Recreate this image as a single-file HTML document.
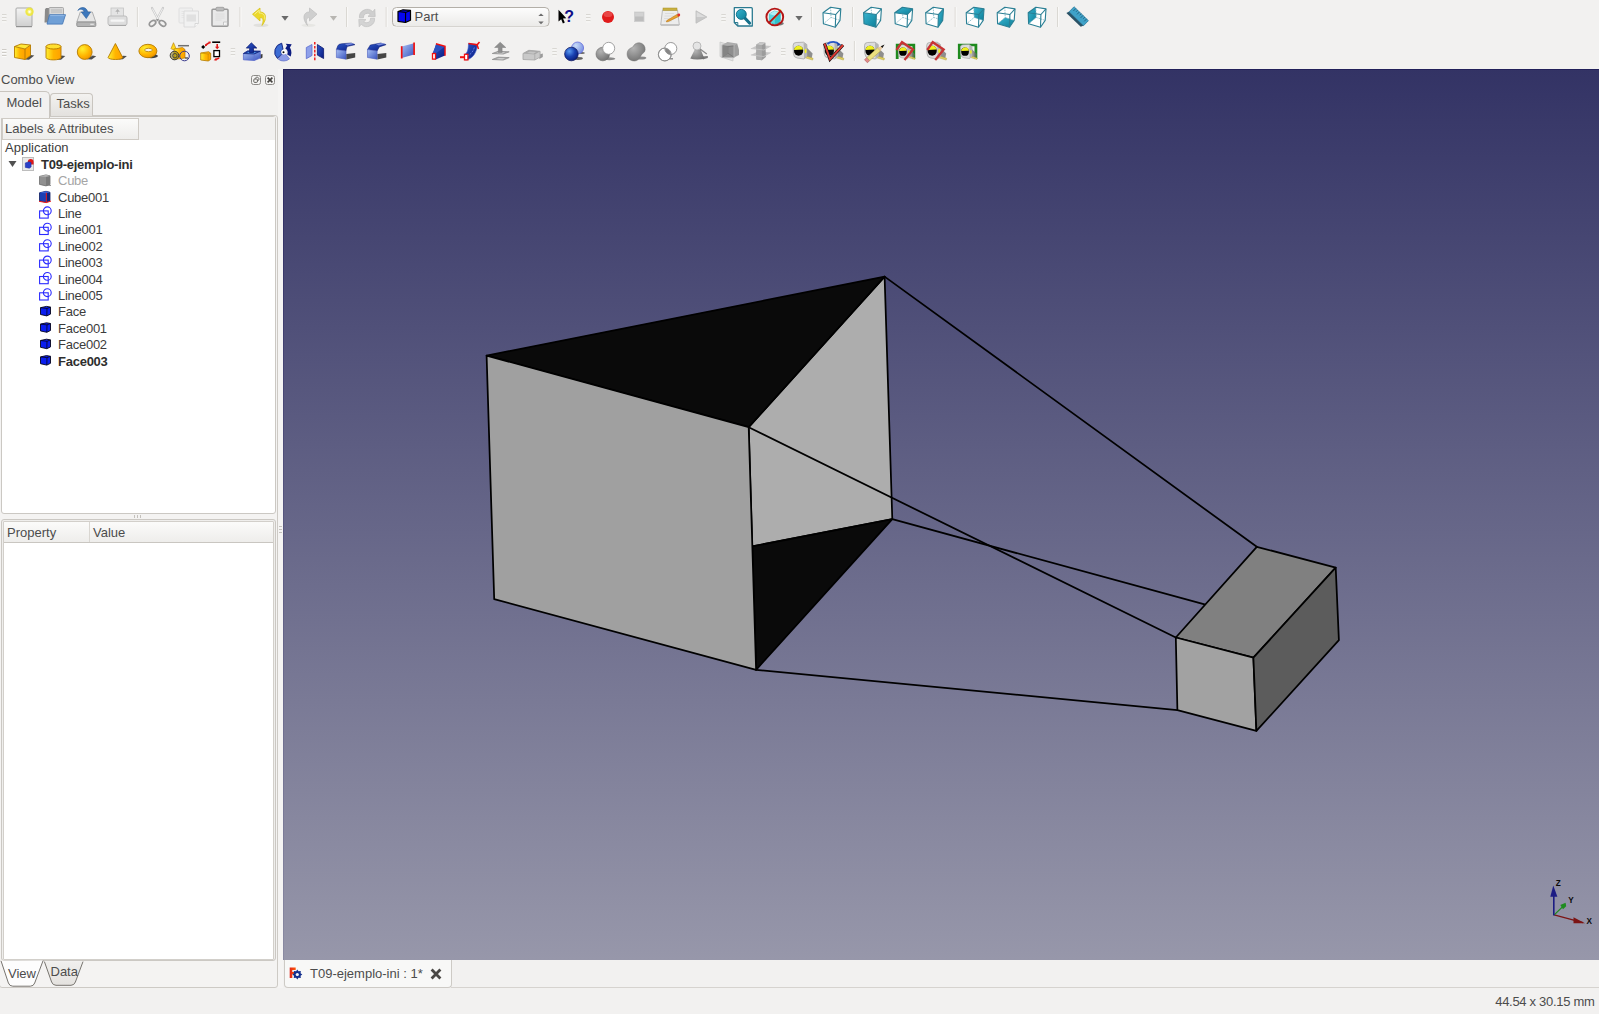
<!DOCTYPE html>
<html>
<head>
<meta charset="utf-8">
<title>FreeCAD</title>
<style>
html,body{margin:0;padding:0;}
body{width:1599px;height:1014px;overflow:hidden;background:#f2f1f0;font-family:"Liberation Sans",sans-serif;font-size:13px;color:#4c4c4c;position:relative;}
.abs{position:absolute;}
.t{position:absolute;white-space:nowrap;line-height:16px;}
#view3d{position:absolute;left:283px;top:69px;width:1316px;height:891px;background:linear-gradient(to bottom,#333365 0%,#9797aa 100%);}
#view3d svg{position:absolute;left:0;top:0;}
.frame{position:absolute;border:1px solid #cbc8c3;border-radius:3px;background:#fff;box-sizing:border-box;}
.hdr{position:absolute;box-sizing:border-box;border:1px solid #cfcbc5;background:linear-gradient(to bottom,#fbfbfa,#eeedeb);}
.row{position:absolute;left:58px;white-space:nowrap;line-height:16px;color:#3c3c3c;letter-spacing:-0.25px;}
</style>
</head>
<body>

<!-- ============ 3D VIEW ============ -->
<div id="view3d">
<div class="abs" style="left:0;top:0;width:1316px;height:1px;background:#22205a;"></div>
<div class="abs" style="left:0;top:0;width:1px;height:891px;background:linear-gradient(to bottom,#22205a 0%,#8a8aa2 100%);"></div>
<svg width="1316" height="891" viewBox="283 69 1316 891">
 <g stroke="#000" stroke-width="1.75" stroke-linejoin="round" stroke-linecap="round">
  <!-- light inner face -->
  <polygon points="748.7,427.2 884.6,276.6 892.3,519.2 752.2,546.4" fill="#adadad"/>
  <!-- black top -->
  <polygon points="486.6,355.6 884.6,276.6 748.7,427.2" fill="#0a0a0a"/>
  <!-- black bottom -->
  <polygon points="752.2,546.4 892.3,519.2 756.1,669.8" fill="#0a0a0a"/>
  <!-- front big face -->
  <polygon points="486.6,355.6 748.7,427.2 756.1,669.8 494.2,599.2" fill="#a0a0a0"/>
  <!-- connecting lines -->
  <line x1="884.6" y1="276.6" x2="1256.8" y2="546.8"/>
  <line x1="748.7" y1="427.2" x2="1175.8" y2="637.5"/>
  <line x1="892.3" y1="519.2" x2="1204.6" y2="604.4"/>
  <line x1="756.1" y1="669.8" x2="1177.4" y2="710.1"/>
  <!-- small box -->
  <polygon points="1256.8,546.8 1335.7,567.6 1253.4,657.7 1175.8,637.5" fill="#808080"/>
  <polygon points="1175.8,637.5 1253.4,657.7 1256.4,730.9 1177.4,710.1" fill="#a2a2a2"/>
  <polygon points="1253.4,657.7 1335.7,567.6 1338.9,640.2 1256.4,730.9" fill="#5c5c5c"/>
 </g>
  <!-- axis cross -->
 <g stroke-linecap="butt">
  <line x1="1554.2" y1="914.9" x2="1583" y2="922.6" stroke="#7c1414" stroke-width="1.3"/>
  <polygon points="1573.5,917.3 1585,923.3 1573.5,923.3" fill="#7c1414"/>
  <line x1="1554.2" y1="914.9" x2="1563" y2="906.4" stroke="#1e8c1e" stroke-width="1.3"/>
  <polygon points="1560.3,905 1565.6,902.7 1566.2,906.2 1563,909.2" fill="#1e8c1e"/>
  <line x1="1553.8" y1="915.5" x2="1553.8" y2="895" stroke="#1c1c84" stroke-width="1.6"/>
  <polygon points="1553.3,885.6 1557.4,896.8 1550.3,896.8" fill="#1c1c84"/>
 </g>
 <g font-family="Liberation Sans,sans-serif" font-size="8.2" font-weight="bold" fill="#0a0a0a">
  <text x="1555.7" y="885.5">Z</text><text x="1568.2" y="902.5">Y</text><text x="1586.6" y="924.2">X</text>
 </g>
</svg>
</div>

<!-- ============ COMBO VIEW ============ -->
<div class="t" style="left:1px;top:71.5px;">Combo View</div>
<svg class="abs" style="left:248px;top:72px" width="30" height="16" viewBox="248 72 30 16">
 <rect x="251.5" y="75.5" width="9" height="9" rx="2" fill="#f4f3f2" stroke="#8c8a87" stroke-width="1"/>
 <rect x="253.8" y="79" width="3.6" height="3.4" rx=".8" fill="none" stroke="#55534f" stroke-width=".9"/>
 <path d="M255.2 78.6 a1.9 1.9 0 1 1 2.4 2.3" fill="none" stroke="#55534f" stroke-width=".9"/>
 <rect x="265.5" y="75.5" width="9" height="9" rx="2" fill="#f4f3f2" stroke="#8c8a87" stroke-width="1"/>
 <path d="M267.6 77.6 l4.8 4.8 M272.4 77.6 l-4.8 4.8" stroke="#45433f" stroke-width="1.6" fill="none"/>
</svg>

<!-- dock outer frame bottom -->
<div class="abs" style="left:-0.6px;top:115.4px;width:278.2px;height:872.8px;box-sizing:border-box;border:1.2px solid #cdcac5;border-radius:3px;background:#f4f3f2;"></div>
<div class="abs" style="left:278px;top:69px;width:5px;height:919px;background:#f5f4f3;"></div>

<!-- tabs Model / Tasks -->
<div class="abs" style="left:50px;top:93px;width:43px;height:23px;box-sizing:border-box;border:1px solid #c9c5bf;border-bottom:none;border-radius:4px 4px 0 0;background:linear-gradient(to bottom,#f3f2f0,#e3e1de);"></div>
<div class="abs" style="left:0;top:90.5px;width:50px;height:27px;box-sizing:border-box;border:1px solid #c9c5bf;border-left:none;border-bottom:none;border-radius:0 5px 0 0;background:#f2f1f0;z-index:2"></div>
<div class="t" style="left:6.5px;top:95px;z-index:3">Model</div>
<div class="t" style="left:56.5px;top:95.5px;">Tasks</div>

<!-- tree frame -->
<div class="frame" style="left:1px;top:116.4px;width:275.3px;height:397.8px;"></div>
<div class="abs" style="left:2px;top:117px;width:273.2px;height:23px;background:#f2f1f0;"></div>
<div class="hdr" style="left:2px;top:118px;width:137px;height:22px;"></div>
<div class="t" style="left:5px;top:121px;">Labels &amp; Attributes</div>
<div class="t" style="left:5px;top:140px;color:#3c3c3c;">Application</div>

<!-- splitter handles -->
<div class="abs" style="left:134px;top:515px;width:8px;height:3px;background:repeating-linear-gradient(to right,#c4c1bc 0 1px,transparent 1px 3px);"></div>
<div class="abs" style="left:279px;top:526px;width:3px;height:7px;background:repeating-linear-gradient(to bottom,#c4c1bc 0 1px,transparent 1px 3px);"></div>

<!-- property frame -->
<div class="frame" style="left:1.3px;top:519px;width:275px;height:442.3px;background:#efeeec;"></div>
<div class="frame" style="left:2.6px;top:521px;width:271.8px;height:438.6px;border-color:#d2cfca;border-radius:1px;"></div>
<div class="hdr" style="left:3.6px;top:522px;width:269.8px;height:21px;border:none;border-bottom:1px solid #c9c6c1;"></div>
<div class="abs" style="left:89px;top:522px;width:1px;height:20px;background:#d9d6d1;"></div>
<div class="t" style="left:7px;top:524.5px;">Property</div>
<div class="t" style="left:93px;top:524.5px;">Value</div>

<!-- View / Data tabs -->
<svg class="abs" style="left:0;top:959px" width="100" height="29" viewBox="0 959 100 29">
 <defs><linearGradient id="tg" x1="0" y1="0" x2="0" y2="1"><stop offset="0" stop-color="#f0efed"/><stop offset="1" stop-color="#e4e2df"/></linearGradient></defs>
 <path d="M44.4 961.6 L51.6 982 Q52.8 985.3 56 985.3 L71 985.3 Q74.2 985.3 75.4 982 L83 961.6z" fill="url(#tg)" stroke="none"/>
 <path d="M44.4 961.6 L51.6 982 Q52.8 985.3 56 985.3 L71 985.3 Q74.2 985.3 75.4 982 L83 961.6" fill="none" stroke="#77746f" stroke-width="1"/>
 <path d="M1 960.8 L8.4 983 Q9.5 986.2 12.8 986.2 L30.3 986.2 Q33.6 986.2 34.7 983 L43.1 960.6z" fill="#fdfdfd" stroke="none"/>
 <path d="M1 960.8 L8.4 983 Q9.5 986.2 12.8 986.2 L30.3 986.2 Q33.6 986.2 34.7 983 L43.1 960.6" fill="none" stroke="#77746f" stroke-width="1"/>
</svg>
<div class="t" style="left:8px;top:965.5px;">View</div>
<div class="t" style="left:50.5px;top:964.3px;">Data</div>

<!-- MDI tab -->
<div class="abs" style="left:283.5px;top:960px;width:168px;height:28.2px;box-sizing:border-box;border:1.2px solid #cdcac5;border-top:none;border-radius:0 0 4px 4px;background:#f8f8f7;"></div>
<svg class="abs" style="left:287px;top:964px" width="16" height="18" viewBox="287 964 16 18">
 <defs><linearGradient id="fg" x1="0" y1="0" x2="1" y2="0"><stop offset="0" stop-color="#e02418"/><stop offset="1" stop-color="#ff5a08"/></linearGradient></defs>
 <path d="M289.7 967.5 h6 v2.5 h-3.4 v1.9 h2.4 v2.1 h-2.4 v4 h-2.6z" fill="url(#fg)"/>
 <g transform="translate(297.3,974.5)"><path d="M0-5 L1.2-3.3 L3.5-3.5 L3.3-1.2 L5 0 L3.3 1.2 L3.5 3.5 L1.2 3.3 L0 5 L-1.2 3.3 L-3.5 3.5 L-3.3 1.2 L-5 0 L-3.3-1.2 L-3.5-3.5 L-1.2-3.3z" fill="#14308e"/><circle r="1.6" fill="#f4f6fa"/></g>
</svg>
<div class="t" style="left:310px;top:966.3px;">T09-ejemplo-ini : 1*</div>
<svg class="abs" style="left:428px;top:966px" width="16" height="16" viewBox="428 966 16 16">
 <path d="M431.6 969.6 l8.8 8.8 M440.4 969.6 l-8.8 8.8" stroke="#4a4845" stroke-width="2.8" fill="none"/>
</svg>

<!-- status -->
<div class="abs" style="left:451px;top:987px;width:1148px;height:1.2px;background:#d6d3cf;"></div>
<div class="t" style="right:4.5px;top:993.8px;letter-spacing:-0.3px;">44.54 x 30.15 mm</div>

<!-- tree rows -->
<div class="row" style="left:41px;top:156.9px;font-weight:bold;color:#2e2e2e;">T09-ejemplo-ini</div>
<div class="row" style="top:173.3px;color:#a5a5a5;">Cube</div>
<div class="row" style="top:189.7px;">Cube001</div>
<div class="row" style="top:206.0px;">Line</div>
<div class="row" style="top:222.4px;">Line001</div>
<div class="row" style="top:238.8px;">Line002</div>
<div class="row" style="top:255.2px;">Line003</div>
<div class="row" style="top:271.6px;">Line004</div>
<div class="row" style="top:287.9px;">Line005</div>
<div class="row" style="top:304.3px;">Face</div>
<div class="row" style="top:320.7px;">Face001</div>
<div class="row" style="top:337.1px;">Face002</div>
<div class="row" style="top:353.5px;font-weight:bold;color:#2e2e2e;">Face003</div>
<svg class="abs" style="left:0;top:150px" width="140" height="230" viewBox="0 150 140 230">
<polygon points="8.5,161 16.5,161 12.5,167" fill="#505050"/>
<rect x="22.5" y="157.5" width="11" height="13" fill="#e9e9e9" stroke="#bdbdbd" stroke-width="1"/>
<path d="M27.8 162 a2.9 2.9 0 0 1 5.8 0 v2.6 h-5.8z" fill="#e01818"/>
<path d="M25.3 162.9 l3.8 -1.2 l2 .9 v4.4 l-1.8 1.2 l-4 -.8z" fill="#2a40c8" stroke="#1a2a9a" stroke-width=".5"/>
<g transform="translate(39,174.4)"><path d="M0.5 2 L7 0.5 L11 1.5 L11 10 L7 11.5 L0.5 10z" fill="#909090" stroke="#6e6e6e" stroke-width=".8"/><path d="M7 2.2 L11 1.5 L11 10 L7 11.5z" fill="#7a7a7a"/><path d="M0.5 2 L7 2.4 L11 1.5 L7 0.5z" fill="#b8b8b8"/><path d="M7 11.5 l5 -1.2 l0 1z" fill="#777"/></g>
<g transform="translate(39,190.8)"><path d="M0.5 2 L7 0.5 L11 1.5 L11 10 L7 11.5 L0.5 10z" fill="#1c3fb4" stroke="#0a1a60" stroke-width=".8"/><path d="M7 2.2 L11 1.5 L11 10 L7 11.5z" fill="#0d2580"/><path d="M0.5 2 L7 2.4 L11 1.5 L7 0.5z" fill="#3c62d8"/><path d="M7.3 2 V11.5 M0 10.5 L7.3 11.8 L12 10.3" fill="none" stroke="#f01818" stroke-width="1"/></g>
<g transform="translate(39,206.6)" fill="none" stroke="#2a2aff" stroke-width="1.1"><rect x="0.6" y="4.3" width="8.6" height="7.2"/><circle cx="8.3" cy="4.2" r="3.9"/></g>
<g transform="translate(39,223.0)" fill="none" stroke="#2a2aff" stroke-width="1.1"><rect x="0.6" y="4.3" width="8.6" height="7.2"/><circle cx="8.3" cy="4.2" r="3.9"/></g>
<g transform="translate(39,239.4)" fill="none" stroke="#2a2aff" stroke-width="1.1"><rect x="0.6" y="4.3" width="8.6" height="7.2"/><circle cx="8.3" cy="4.2" r="3.9"/></g>
<g transform="translate(39,255.8)" fill="none" stroke="#2a2aff" stroke-width="1.1"><rect x="0.6" y="4.3" width="8.6" height="7.2"/><circle cx="8.3" cy="4.2" r="3.9"/></g>
<g transform="translate(39,272.2)" fill="none" stroke="#2a2aff" stroke-width="1.1"><rect x="0.6" y="4.3" width="8.6" height="7.2"/><circle cx="8.3" cy="4.2" r="3.9"/></g>
<g transform="translate(39,288.5)" fill="none" stroke="#2a2aff" stroke-width="1.1"><rect x="0.6" y="4.3" width="8.6" height="7.2"/><circle cx="8.3" cy="4.2" r="3.9"/></g>
<g transform="translate(40,305.9)"><path d="M0.5 1.8 L6.5 0.5 L10.5 1.2 L10.5 8.2 L6.8 10 L0.5 8.6z" fill="#0a1ef0" stroke="#05051a" stroke-width=".9" stroke-linejoin="round"/><path d="M0.5 1.8 L7 2.6 L10.5 1.2 M7 2.6 L6.8 10" fill="none" stroke="#05051a" stroke-width=".8"/></g>
<g transform="translate(40,322.3)"><path d="M0.5 1.8 L6.5 0.5 L10.5 1.2 L10.5 8.2 L6.8 10 L0.5 8.6z" fill="#0a1ef0" stroke="#05051a" stroke-width=".9" stroke-linejoin="round"/><path d="M0.5 1.8 L7 2.6 L10.5 1.2 M7 2.6 L6.8 10" fill="none" stroke="#05051a" stroke-width=".8"/></g>
<g transform="translate(40,338.7)"><path d="M0.5 1.8 L6.5 0.5 L10.5 1.2 L10.5 8.2 L6.8 10 L0.5 8.6z" fill="#0a1ef0" stroke="#05051a" stroke-width=".9" stroke-linejoin="round"/><path d="M0.5 1.8 L7 2.6 L10.5 1.2 M7 2.6 L6.8 10" fill="none" stroke="#05051a" stroke-width=".8"/></g>
<g transform="translate(40,355.1)"><path d="M0.5 1.8 L6.5 0.5 L10.5 1.2 L10.5 8.2 L6.8 10 L0.5 8.6z" fill="#0a1ef0" stroke="#05051a" stroke-width=".9" stroke-linejoin="round"/><path d="M0.5 1.8 L7 2.6 L10.5 1.2 M7 2.6 L6.8 10" fill="none" stroke="#05051a" stroke-width=".8"/></g>
</svg>
<!-- ============ TOOLBARS ============ -->
<svg class="abs" style="left:0;top:0" width="1599" height="69" viewBox="0 0 1599 69">
<defs>
<linearGradient id="gy" x1="0" y1="0" x2="1" y2="1"><stop offset="0" stop-color="#fff030"/><stop offset=".6" stop-color="#ffb400"/><stop offset="1" stop-color="#f59a00"/></linearGradient>
<linearGradient id="gyv" x1="0" y1="0" x2="1" y2="0"><stop offset="0" stop-color="#fff030"/><stop offset=".5" stop-color="#ffb400"/><stop offset="1" stop-color="#ffa000"/></linearGradient>
<radialGradient id="gys" cx=".35" cy=".3" r=".8"><stop offset="0" stop-color="#fff030"/><stop offset=".6" stop-color="#ffb400"/><stop offset="1" stop-color="#f09000"/></radialGradient>
<linearGradient id="gb" x1="0" y1="0" x2="1" y2="1"><stop offset="0" stop-color="#a8c0f4"/><stop offset="1" stop-color="#3a55c0"/></linearGradient>
<linearGradient id="gbd" x1="0" y1="0" x2="1" y2="1"><stop offset="0" stop-color="#2c58c8"/><stop offset="1" stop-color="#0a1a80"/></linearGradient>
<radialGradient id="gbs" cx=".35" cy=".3" r=".8"><stop offset="0" stop-color="#5a9af0"/><stop offset=".5" stop-color="#1840b0"/><stop offset="1" stop-color="#081870"/></radialGradient>
<radialGradient id="gbl" cx=".35" cy=".3" r=".8"><stop offset="0" stop-color="#c8dcf8"/><stop offset="1" stop-color="#7088e0"/></radialGradient>
<radialGradient id="ggs" cx=".35" cy=".3" r=".8"><stop offset="0" stop-color="#b4b4b4"/><stop offset="1" stop-color="#6e6e6e"/></radialGradient>
<linearGradient id="gg" x1="0" y1="0" x2="0" y2="1"><stop offset="0" stop-color="#f4f4f4"/><stop offset="1" stop-color="#cfcfcf"/></linearGradient>
<linearGradient id="gt" x1="0" y1="0" x2="1" y2="1"><stop offset="0" stop-color="#38b4d0"/><stop offset="1" stop-color="#0d7f98"/></linearGradient>
<linearGradient id="gcb" x1="0" y1="0" x2="0" y2="1"><stop offset="0" stop-color="#fdfdfd"/><stop offset="1" stop-color="#ebeae8"/></linearGradient>
</defs>
<g stroke="#cfccc7" stroke-width="1"><path d="M2 14.8h4.5M2 17.8h4.5M2 20.8h4.5"/></g><g stroke="#fcfcfb" stroke-width="1"><path d="M2 15.8h4.5M2 18.8h4.5M2 21.8h4.5"/></g>
<g transform="translate(24.0,17.0)"><rect x="-8" y="-9" width="16" height="18.5" rx="1" fill="url(#gg)" stroke="#a9a9a9" stroke-width="1"/><path d="M-8 9.7h16" stroke="#8a8a8a" stroke-width="1"/><circle cx="5.5" cy="-5.2" r="4.2" fill="#f0e838" opacity=".9"/><circle cx="5.5" cy="-5.2" r="2" fill="#fbf8a0"/><circle cx="5.5" cy="-5.2" r=".9" fill="#fff"/></g>
<g transform="translate(55.5,17.0)"><path d="M-10.5 -7.5 l1 -1.5 h3 l.5 1.5 v13 h-5z" fill="#8a8a8a"/><rect x="-6.5" y="-9.5" width="14.5" height="9" rx="1" fill="#d8d8d8" stroke="#9a9a9a" stroke-width=".8"/><path d="M-4.5 -7h11M-4.5 -5h11" stroke="#b0b0b0" stroke-width=".8"/><path d="M-6 -2.3 h16 l-3 9.4 h-15.5z" fill="#6f9fd6" stroke="#4a7ab8" stroke-width=".9" stroke-linejoin="round"/><path d="M-5.3 -1.4 h14.3" stroke="#9cc0ea" stroke-width=".8"/></g>
<g transform="translate(86.3,17.0)"><path d="M-6 -5 h12 l3.5 10 h-19z" fill="#e6e6e6" stroke="#a8a8a8" stroke-width=".9"/><rect x="-9.5" y="5" width="19" height="4.5" rx="1" fill="#b4b4b4" stroke="#8c8c8c" stroke-width=".9"/><path d="M4 7.3h3.5" stroke="#e8e8e8" stroke-width="1.2"/><path d="M-8.5 -6.5 c2 -4 8.5 -4.5 10 1.5 h2.8 l-4.3 6.5 l-5 -6.5 h2.8 c-.6 -3 -4 -3.5 -6.3 -1.5z" fill="#3d78bc" stroke="#2c5f9e" stroke-width=".6"/></g>
<g transform="translate(117.5,17.0)"><rect x="-6.5" y="-9" width="12.5" height="8.5" fill="#e4e4e4" stroke="#c4c4c4" stroke-width=".8"/><path d="M-.2 -3 v-2.3 h-2 l2.3 -2.6 l2.3 2.6 h-2 v2.3z" fill="#b0b0b0"/><rect x="-9.5" y="-1" width="19" height="9.3" rx="2" fill="#dedede" stroke="#b8b8b8" stroke-width=".9"/><rect x="-7" y="2.5" width="14" height="2.3" rx="1" fill="#f6f6f6"/><path d="M-8.5 8.5h17" stroke="#a8a8a8" stroke-width="1"/></g>
<path d="M137.4 7v20" stroke="#d8d5d0" stroke-width="1"/><path d="M138.4 7v20" stroke="#faf9f8" stroke-width="1"/>
<g transform="translate(157.5,17.0)"><path d="M-5.5 -9 L1.2 3.5 M5.5 -9 L-1.2 3.5" stroke="#c9c9c9" stroke-width="2.2" stroke-linecap="round" fill="none"/><path d="M-5.2 -8.5 L0.6 2.5 M5.2 -8.5 L-0.6 2.5" stroke="#f2f2f2" stroke-width="1" fill="none"/><ellipse cx="-5" cy="6.3" rx="3.6" ry="2.3" transform="rotate(-35 -5 6.3)" fill="none" stroke="#969696" stroke-width="1.7"/><ellipse cx="5" cy="6.3" rx="3.6" ry="2.3" transform="rotate(35 5 6.3)" fill="none" stroke="#969696" stroke-width="1.7"/><path d="M-1.5 2 L1.5 2 L0 4.5z" fill="#969696"/></g>
<g transform="translate(188.5,17.0)"><rect x="-9.5" y="-9" width="13.5" height="15" rx="1" fill="#efefef" stroke="#dedede" stroke-width=".9"/><path d="M-7 -5.5h8M-7 -3.5h8M-7 -1.5h8M-7 .5h8" stroke="#e2e2e2" stroke-width=".8"/><path d="M-4.5 -6 h14.5 v12.5 l-3.5 3.5 h-11z" fill="#f1f1f1" stroke="#d9d9d9" stroke-width=".9"/><rect x="-2" y="-2.5" width="9.5" height="7" fill="#e0e0e0"/><path d="M10 6.5 l-3.5 0 v3.5" fill="#fafafa" stroke="#d0d0d0" stroke-width=".8"/></g>
<g transform="translate(220.0,17.0)"><rect x="-8" y="-7.8" width="16" height="17" rx="1" fill="#e9e9e9" stroke="#9a9a9a" stroke-width="1.5"/><rect x="-4" y="-9.7" width="8" height="3.6" rx="1" fill="#bcbcbc" stroke="#9a9a9a" stroke-width=".8"/><path d="M-4.5 -3h9M-4.5 -1h9M-4.5 1h9M-4.5 3h6" stroke="#dadada" stroke-width=".9"/><path d="M7.3 5 l-3.8 0 v3.8" fill="#f7f7f7" stroke="#bdbdbd" stroke-width=".8"/></g>
<path d="M240.0 7v20" stroke="#d8d5d0" stroke-width="1"/><path d="M241.0 7v20" stroke="#faf9f8" stroke-width="1"/>
<g transform="translate(260.0,17.0)"><ellipse cx="1" cy="8.3" rx="7.5" ry="1.8" fill="#dcdcd8" opacity=".8"/><path d="M-7.5 -2.8 L0 -9 V-5 C6 -5.2 7.8 1.5 2 8.5 C4 3 3 .5 0 .6 V4z" fill="#ecd82a" stroke="#d8c41c" stroke-width=".8" stroke-linejoin="round"/><path d="M-5.5 -2.8 L-.8 -6.8 V-4 C3 -4.2 5.5 -1.5 4.8 2.5" fill="none" stroke="#f8f090" stroke-width="1"/></g>
<polygon points="281.4,16.1 288.6,16.1 285,20.7" fill="#6a6a6a"/>
<g transform="translate(309.5,17.0)"><ellipse cx="-1" cy="8.3" rx="7" ry="1.6" fill="#e4e3e0" opacity=".8"/><path d="M7.5 -2.8 L0 -9 V-5 C-6 -5.2 -7.8 1.5 -2 8.5 C-4 3 -3 .5 0 .6 V4z" fill="#cfcfcf" stroke="#c2c2c2" stroke-width=".8" stroke-linejoin="round"/></g>
<polygon points="329.9,16.1 337.1,16.1 333.5,20.7" fill="#b8b6b2"/>
<path d="M346.6 7v20" stroke="#d8d5d0" stroke-width="1"/><path d="M347.6 7v20" stroke="#faf9f8" stroke-width="1"/>
<g transform="translate(367.0,17.0)"><path d="M-7.6 .8 A7.8 7.8 0 0 1 5.8 -5.2 L7.8 -7.8 L8.2 -.4 L1 -.6 L3.3 -2.8 A4.2 4.2 0 0 0 -3.6 .8z" fill="#cfcfcf" stroke="#bfbfbf" stroke-width=".7"/><path d="M7.6 1.2 A7.8 7.8 0 0 1 -5.8 7.2 L-7.8 9.8 L-8.2 2.4 L-1 2.6 L-3.3 4.8 A4.2 4.2 0 0 0 3.6 1.2z" fill="#d4d4d4" stroke="#c2c2c2" stroke-width=".7"/></g>
<path d="M386.2 7v20" stroke="#d8d5d0" stroke-width="1"/><path d="M387.2 7v20" stroke="#faf9f8" stroke-width="1"/>
<rect x="392.5" y="7.5" width="156.5" height="19" rx="4" fill="url(#gcb)" stroke="#b3afa8" stroke-width="1"/>
<path d="M393 26.8 h156" stroke="#fbfbfa" stroke-width="1" opacity=".7"/>
<path d="M398 11.5 L403 9.8 L410.5 10.4 L410.5 20.3 L405.5 22.5 L398 21.3z" fill="#0606f2" stroke="#000" stroke-width="1.2" stroke-linejoin="round"/><path d="M398 11.5 L405.6 12.4 L410.5 10.4 M405.6 12.4 L405.5 22.5" fill="none" stroke="#000" stroke-width="1.1"/>
<polygon points="538.3,16 541,13.4 543.7,16" fill="#6c6c6c"/><polygon points="538.3,21.6 541,24.2 543.7,21.6" fill="#6c6c6c"/>
<g transform="translate(565.5,17.0)"><path d="M-7 -7.2 L-7 4.6 L-4.3 2.3 L-2.6 6.5 L-.7 5.6 L-2.5 1.6 L.8 1.3z" fill="#000"/></g>
<text x="564.2" y="21.6" font-family="Liberation Sans,sans-serif" font-weight="bold" font-size="16" fill="#101088">?</text>
<g stroke="#cfccc7" stroke-width="1"><path d="M586 14.8h4.5M586 17.8h4.5M586 20.8h4.5"/></g><g stroke="#fcfcfb" stroke-width="1"><path d="M586 15.8h4.5M586 18.8h4.5M586 21.8h4.5"/></g>
<g transform="translate(608.0,17.0)"><circle r="6" fill="#e01b1b"/><ellipse cx="0" cy="-2.6" rx="4.3" ry="2.6" fill="#f06a6a" opacity=".55"/></g>
<g transform="translate(639.3,17.0)"><rect x="-4.7" y="-5" width="9.4" height="9.6" fill="#bdbdbd" stroke="#cfcfcf" stroke-width=".8"/><rect x="-4.2" y="-4.5" width="8.4" height="4" fill="#d2d2d2"/></g>
<g transform="translate(670.0,17.0)"><path d="M-7.5 -7 h15 l1.8 15 h-18.6z" fill="#ececec" stroke="#b4b4b4" stroke-width=".9"/><path d="M-9 7.2 h18 v1.6 h-18z" fill="#c0c0c0"/><rect x="-7" y="-9" width="14" height="2.4" fill="#c8b040" stroke="#a89020" stroke-width=".5"/><path d="M-5 -3.5h9M-5.5 -1h10M-6 1.5h10M-6.3 4h8" stroke="#d8d8d8" stroke-width=".8"/><path d="M-3.2 3.6 L7.4 -2.8 L8.8 -.6 L-1.6 4.6 L-3.6 4.9z" fill="#e8a030" stroke="#b87818" stroke-width=".6"/><circle cx="8.8" cy="-2" r="1.4" fill="#e03030"/></g>
<g transform="translate(701.3,17.0)"><path d="M-5.3 -6.2 L5.6 0 L-5.3 6.2z" fill="#c8c8c8" stroke="#bcbcbc" stroke-width=".8" stroke-linejoin="round"/><path d="M-4.6 -5 L4 0 L-4.6 0z" fill="#dcdcdc"/></g>
<g stroke="#cfccc7" stroke-width="1"><path d="M721.3 14.8h4.5M721.3 17.8h4.5M721.3 20.8h4.5"/></g><g stroke="#fcfcfb" stroke-width="1"><path d="M721.3 15.8h4.5M721.3 18.8h4.5M721.3 21.8h4.5"/></g>
<g transform="translate(743.3,17.0)"><path d="M-9 -9.3 h17 q1 0 1 1 v17.3 h-14.5 l-3.5 -3.5z" fill="#fff" stroke="#2a7a90" stroke-width="1.3" stroke-linejoin="round"/><path d="M-9 5.5 h3.5 v3.5" fill="none" stroke="#2a7a90" stroke-width="1"/><path d="M1.5 1 L6.2 6" stroke="#16708a" stroke-width="3.2" stroke-linecap="round"/><circle cx="-2" cy="-2.6" r="5" fill="url(#gt)" stroke="#0f6a84" stroke-width=".9"/></g>
<g transform="translate(774.8,17.0)"><ellipse cx="3" cy="6.5" rx="6" ry="2" fill="#444" opacity=".7"/><path d="M-5.5 -3 L-.5 -6 L5.5 -4.5 L5.5 4 L0 7.5 L-5.5 5z" fill="#5ad8e0" stroke="#38b8c0" stroke-width=".6"/><path d="M-5.5 -3 L0 -1.2 L5.5 -4.5 L-.5 -6z" fill="#b0f0f4"/><path d="M0 -1.2 L0 7.5 L5.5 4 L5.5 -4.5z" fill="#30c0cc"/><path d="M-1 2 L6 -7.5" stroke="#f0d820" stroke-width="1.5"/><circle r="8.4" fill="none" stroke="#b41414" stroke-width="1.9"/><path d="M5.9 -5.9 L-5.9 5.9" stroke="#b41414" stroke-width="1.9"/></g>
<polygon points="795.4,16.1 802.6,16.1 799,20.7" fill="#6a6a6a"/>
<path d="M811.6 7v20" stroke="#d8d5d0" stroke-width="1"/><path d="M812.6 7v20" stroke="#faf9f8" stroke-width="1"/>
<g transform="translate(831.8,17.0)"><polygon points="-8.8,-4.2 -1.2,-9.8 9,-8.1 8.2,3.4 3.5,10.2 -8.4,6.8" fill="#fff" stroke="none"/><g fill="none" stroke="#7fb4c2" stroke-width=".8" stroke-dasharray="1.6 .8"><polyline points="-1.2,-9.8 -0.8,0.4 -8.4,6.8"/><polyline points="-0.8,0.4 8.2,3.4"/></g><g fill="none" stroke="#2a7f94" stroke-width="1.1" stroke-linejoin="round"><polygon points="-8.8,-4.2 -1.2,-9.8 9,-8.1 8.2,3.4 3.5,10.2 -8.4,6.8"/><polyline points="-8.8,-4.2 3.9,-2.5 3.5,10.2"/><polyline points="3.9,-2.5 9,-8.1"/></g></g>
<path d="M852.6 7v20" stroke="#d8d5d0" stroke-width="1"/><path d="M853.6 7v20" stroke="#faf9f8" stroke-width="1"/>
<g transform="translate(872.4,17.0)"><polygon points="-8.8,-4.2 -1.2,-9.8 9,-8.1 8.2,3.4 3.5,10.2 -8.4,6.8" fill="#fff" stroke="none"/><g fill="none" stroke="#7fb4c2" stroke-width=".8" stroke-dasharray="1.6 .8"><polyline points="-1.2,-9.8 -0.8,0.4 -8.4,6.8"/><polyline points="-0.8,0.4 8.2,3.4"/></g><polygon points="-8.8,-4.2 3.9,-2.5 3.5,10.2 -8.4,6.8" fill="url(#gt)"/><g fill="none" stroke="#2a7f94" stroke-width="1.1" stroke-linejoin="round"><polygon points="-8.8,-4.2 -1.2,-9.8 9,-8.1 8.2,3.4 3.5,10.2 -8.4,6.8"/><polyline points="-8.8,-4.2 3.9,-2.5 3.5,10.2"/><polyline points="3.9,-2.5 9,-8.1"/></g></g>
<g transform="translate(903.6,17.0)"><polygon points="-8.8,-4.2 -1.2,-9.8 9,-8.1 8.2,3.4 3.5,10.2 -8.4,6.8" fill="#fff" stroke="none"/><g fill="none" stroke="#7fb4c2" stroke-width=".8" stroke-dasharray="1.6 .8"><polyline points="-1.2,-9.8 -0.8,0.4 -8.4,6.8"/><polyline points="-0.8,0.4 8.2,3.4"/></g><polygon points="-8.8,-4.2 -1.2,-9.8 9,-8.1 3.9,-2.5" fill="url(#gt)"/><g fill="none" stroke="#2a7f94" stroke-width="1.1" stroke-linejoin="round"><polygon points="-8.8,-4.2 -1.2,-9.8 9,-8.1 8.2,3.4 3.5,10.2 -8.4,6.8"/><polyline points="-8.8,-4.2 3.9,-2.5 3.5,10.2"/><polyline points="3.9,-2.5 9,-8.1"/></g></g>
<g transform="translate(934.5,17.0)"><polygon points="-8.8,-4.2 -1.2,-9.8 9,-8.1 8.2,3.4 3.5,10.2 -8.4,6.8" fill="#fff" stroke="none"/><g fill="none" stroke="#7fb4c2" stroke-width=".8" stroke-dasharray="1.6 .8"><polyline points="-1.2,-9.8 -0.8,0.4 -8.4,6.8"/><polyline points="-0.8,0.4 8.2,3.4"/></g><polygon points="3.9,-2.5 9,-8.1 8.2,3.4 3.5,10.2" fill="url(#gt)"/><g fill="none" stroke="#2a7f94" stroke-width="1.1" stroke-linejoin="round"><polygon points="-8.8,-4.2 -1.2,-9.8 9,-8.1 8.2,3.4 3.5,10.2 -8.4,6.8"/><polyline points="-8.8,-4.2 3.9,-2.5 3.5,10.2"/><polyline points="3.9,-2.5 9,-8.1"/></g></g>
<path d="M955.2 7v20" stroke="#d8d5d0" stroke-width="1"/><path d="M956.2 7v20" stroke="#faf9f8" stroke-width="1"/>
<g transform="translate(975.0,17.0)"><polygon points="-8.8,-4.2 -1.2,-9.8 9,-8.1 8.2,3.4 3.5,10.2 -8.4,6.8" fill="#fff" stroke="none"/><polygon points="-1.2,-9.8 9,-8.1 8.2,3.4 -0.8,0.4" fill="url(#gt)"/><g fill="none" stroke="#7fb4c2" stroke-width=".8" stroke-dasharray="1.6 .8"><polyline points="-1.2,-9.8 -0.8,0.4 -8.4,6.8"/><polyline points="-0.8,0.4 8.2,3.4"/></g><g fill="none" stroke="#2a7f94" stroke-width="1.1" stroke-linejoin="round"><polygon points="-8.8,-4.2 -1.2,-9.8 9,-8.1 8.2,3.4 3.5,10.2 -8.4,6.8"/><polyline points="-8.8,-4.2 3.9,-2.5 3.5,10.2"/><polyline points="3.9,-2.5 9,-8.1"/></g></g>
<g transform="translate(1006.0,17.0)"><polygon points="-8.8,-4.2 -1.2,-9.8 9,-8.1 8.2,3.4 3.5,10.2 -8.4,6.8" fill="#fff" stroke="none"/><polygon points="-8.4,6.8 3.5,10.2 8.2,3.4 -0.8,0.4" fill="url(#gt)"/><g fill="none" stroke="#7fb4c2" stroke-width=".8" stroke-dasharray="1.6 .8"><polyline points="-1.2,-9.8 -0.8,0.4 -8.4,6.8"/><polyline points="-0.8,0.4 8.2,3.4"/></g><g fill="none" stroke="#2a7f94" stroke-width="1.1" stroke-linejoin="round"><polygon points="-8.8,-4.2 -1.2,-9.8 9,-8.1 8.2,3.4 3.5,10.2 -8.4,6.8"/><polyline points="-8.8,-4.2 3.9,-2.5 3.5,10.2"/><polyline points="3.9,-2.5 9,-8.1"/></g></g>
<g transform="translate(1037.0,17.0)"><polygon points="-8.8,-4.2 -1.2,-9.8 9,-8.1 8.2,3.4 3.5,10.2 -8.4,6.8" fill="#fff" stroke="none"/><polygon points="-8.8,-4.2 -1.2,-9.8 -0.8,0.4 -8.4,6.8" fill="url(#gt)"/><g fill="none" stroke="#7fb4c2" stroke-width=".8" stroke-dasharray="1.6 .8"><polyline points="-1.2,-9.8 -0.8,0.4 -8.4,6.8"/><polyline points="-0.8,0.4 8.2,3.4"/></g><g fill="none" stroke="#2a7f94" stroke-width="1.1" stroke-linejoin="round"><polygon points="-8.8,-4.2 -1.2,-9.8 9,-8.1 8.2,3.4 3.5,10.2 -8.4,6.8"/><polyline points="-8.8,-4.2 3.9,-2.5 3.5,10.2"/><polyline points="3.9,-2.5 9,-8.1"/></g></g>
<path d="M1057.6 7v20" stroke="#d8d5d0" stroke-width="1"/><path d="M1058.6 7v20" stroke="#faf9f8" stroke-width="1"/>
<g transform="translate(1078.3,16.7)"><g transform="rotate(44)"><path d="M-10 2.6 h20 l-1.2 3 h-20z" fill="#2a5266"/><rect x="-10" y="-4.2" width="20" height="7" fill="#3fa2c8" stroke="#2a7a9c" stroke-width=".7"/><path d="M-7.5 -4.2v3.4M-5 -4.2v2.2M-2.5 -4.2v3.4M0 -4.2v2.2M2.5 -4.2v3.4M5 -4.2v2.2M7.5 -4.2v3.4" stroke="#1d5a78" stroke-width=".8"/></g></g>
<g stroke="#cfccc7" stroke-width="1"><path d="M2 49.5h4.5M2 52.5h4.5M2 55.5h4.5"/></g><g stroke="#fcfcfb" stroke-width="1"><path d="M2 50.5h4.5M2 53.5h4.5M2 56.5h4.5"/></g>
<g transform="translate(22.5,51.5)"><path d="M2.5 8 L8 3.6 L11.8 4 L6.5 8.3z" fill="#3c3c3c" opacity=".9"/><path d="M-8 -5 L2.5 -2.5 L2.5 8 L-8 6z" fill="url(#gyv)"/><path d="M2.5 -2.5 L8 -6.5 L8 4 L2.5 8z" fill="#ffa800"/><path d="M-8 -5 L-1.5 -7.5 L8 -6.5 L2.5 -2.5z" fill="#ffe838"/><path d="M-8 -5 L-1.5 -7.5 L8 -6.5 L8 4 L2.5 8 L-8 6z M-8 -5 L2.5 -2.5 L8 -6.5 M2.5 -2.5 V8" fill="none" stroke="#b47a00" stroke-width=".9" stroke-linejoin="round"/></g>
<g transform="translate(53.5,51.5)"><path d="M3 8.3 L8 4 L11.8 4.4 L7.5 8.2z" fill="#3c3c3c" opacity=".9"/><path d="M-7.5 -5 V6 A7.5 2.4 0 0 0 7.5 6 V-5z" fill="url(#gyv)" stroke="#b47a00" stroke-width=".9"/><ellipse cx="0" cy="-5" rx="7.5" ry="2.5" fill="#ffe030" stroke="#b47a00" stroke-width=".9"/></g>
<g transform="translate(84.7,52.0)"><path d="M2 7.3 L8 3.5 L11.5 4.2 L7 7.6z" fill="#3c3c3c" opacity=".9"/><circle r="7.4" fill="url(#gys)" stroke="#b47a00" stroke-width=".9"/></g>
<g transform="translate(115.4,51.5)"><path d="M3 8 L7.5 4.2 L11.5 4.6 L7.5 7.8z" fill="#3c3c3c" opacity=".9"/><path d="M0 -8 L7.3 6 A7.3 2 0 0 1 -7.3 6z" fill="url(#gyv)" stroke="#b47a00" stroke-width=".9" stroke-linejoin="round"/></g>
<g transform="translate(147.9,51.0)"><ellipse cx="3.5" cy="5" rx="6.5" ry="2.2" fill="#404040"/><ellipse rx="9" ry="6.7" fill="url(#gys)" stroke="#b47a00" stroke-width=".9"/><ellipse cx=".6" cy="-1" rx="3.9" ry="1.7" fill="#f4f3f0" stroke="#b47a00" stroke-width=".8"/></g>
<g transform="translate(179.5,51.5)"><path d="M-8.5 -3 L-6 -8.8 L-3.5 -3 A2.5 .9 0 0 1 -8.5 -3z" fill="#ffd820" stroke="#b47a00" stroke-width=".6"/><path d="M-5.5 -2.5 L3 -4 L5.5 -2 L5.5 6.5 L-5.5 8z" fill="url(#gyv)" stroke="#b47a00" stroke-width=".7"/><path d="M-1.5 -5.8 h11" stroke="#707070" stroke-width="1.5"/><circle cx="-5" cy="4" r="4.3" fill="#8a7a10" opacity=".55"/><circle cx="-5" cy="4" r="4.3" fill="none" stroke="#3a3a3a" stroke-width="1"/><circle cx="-4.6" cy="4.2" r="2.2" fill="none" stroke="#3a3a3a" stroke-width=".9"/><circle cx="5" cy="4.5" r="4.8" fill="none" stroke="#3a3a8c" stroke-width="1"/><path d="M5.5 6.5 h3" stroke="#3a3a3a" stroke-width="1.2"/></g>
<g transform="translate(210.2,51.5)"><path d="M-7 -6.6 l2 2 l-2 2 l-2 -2z" fill="#000"/><path d="M-4.5 -6.5 L-.5 -9.2" stroke="#e01818" stroke-width="1.6"/><path d="M-1.8 -10 l2.6 .2 l-1 2.4z" fill="#e01818"/><path d="M-5.3 -5 l.3 -2.4 l2 1.4z" fill="#e01818"/><path d="M2 -9.3 h8" stroke="#000" stroke-width="1.6"/><path d="M7 -7.6 v3.5" stroke="#e01818" stroke-width="1.6"/><path d="M4.8 -4.8 h4.4 l-2.2 2.6z" fill="#e01818"/><rect x="3.7" y="-.9" width="5.6" height="6" fill="#fff" stroke="#000" stroke-width="1.3"/><path d="M9 6.6 L5 8.2" stroke="#e01818" stroke-width="1.6"/><path d="M3.5 8.8 l2.4 -2.2 l.8 2.4z" fill="#e01818"/><path d="M-9.5 1.5 L-1.5 .2 L.5 1.8 L.5 8 L-2 9.5 L-9.5 8.5z" fill="url(#gyv)" stroke="#b47a00" stroke-width=".8"/><path d="M-9.5 1.5 L-2 2.5 L.5 1.8 M-2 2.5 V9.5" fill="none" stroke="#c88c00" stroke-width=".7"/></g>
<g stroke="#cfccc7" stroke-width="1"><path d="M230.7 48.8h4.5M230.7 51.8h4.5M230.7 54.8h4.5"/></g><g stroke="#fcfcfb" stroke-width="1"><path d="M230.7 49.8h4.5M230.7 52.8h4.5M230.7 55.8h4.5"/></g>
<g transform="translate(252.3,51.5)"><path d="M8 3 l2.2 -.5 v3.5 l-2.2 1.5z" fill="#3a3a3a"/><path d="M-8.9 2 L-4.6 -.6 L8 -.3 L8 6.5 L2 9 L-8.9 8.3z" fill="url(#gb)" stroke="#5060c8" stroke-width=".7" stroke-linejoin="round"/><path d="M-8.9 2 L-4.6 -.6 L8 -.3 L2 2.6z" fill="#1a3c9c" stroke="#0a1870" stroke-width=".6"/><path d="M-5.5 1.6 L-3.5 .3 L4.5 .5 L1.5 1.9z" fill="#4a90e8"/><path d="M2 2.6 V9" stroke="#6070d0" stroke-width=".7"/><path d="M-2.7 1.2 V-3.4 H-6 L-.9 -8.7 L4.5 -3.4 H1.2 V1.2z" fill="url(#gbd)" stroke="#0a1870" stroke-width=".7" stroke-linejoin="round"/></g>
<g transform="translate(283.7,52.0)"><path d="M-2 -8.8 A9 9 0 0 0 -6.3 6.4 L-1.7 1.9 A2.6 2.6 0 0 1 -.6 -2.5z" fill="#3c6cd4" stroke="#0c1c78" stroke-width=".9" stroke-linejoin="round"/><path d="M-5.5 7.2 A9 9 0 0 0 5.8 6.9 L1.8 1.9 A2.6 2.6 0 0 1 -1.6 2.1z" fill="#8c9ce8" stroke="#5060c0" stroke-width=".6"/><path d="M3.5 -6.5 A8.5 8.5 0 0 1 7 4.5 L3.5 2.5 A4.5 4.5 0 0 0 1.6 -3.5z" fill="#0c1c80"/><path d="M2 -8.3 L8 -7.8 L5.5 -3.2z" fill="#0c1c80"/><circle r="2.5" fill="#fff"/><circle cx="-.2" cy=".2" r="1" fill="#000"/></g>
<g transform="translate(314.8,51.5)"><path d="M-8.5 -4 L-2.8 -7 V4 L-8.5 7.2z" fill="#8ea0ea" stroke="#5a6cd0" stroke-width=".8"/><path d="M2.6 -7 L8.8 -3 V7 L2.6 3.6z" fill="url(#gbd)" stroke="#0a1870" stroke-width=".8"/><path d="M0 -9.5 V9" stroke="#f01010" stroke-width="1.4" stroke-dasharray="2.6 1.3"/></g>
<g transform="translate(345.7,51.5)"><path d="M.5 2.5 L9.5 1.5 V6 L.5 8z" fill="#454545"/><path d="M-8 -5.5 Q-7.5 -7.5 -4 -7.8 L5.5 -8.5 L9.3 -6.8 L1.5 -5 Q.5 -2.5 .3 -.5 L-9.3 -2z" fill="url(#gbd)" stroke="#0a1870" stroke-width=".5"/><path d="M2 -6 L9 -7.8 L5.5 -8.6 L-1 -7.6z" fill="#8c9ce8" opacity=".8"/><path d="M-9.3 -2 L.3 -.5 V7.7 L-9.3 6z" fill="url(#gb)" stroke="#4a5cc0" stroke-width=".6"/></g>
<g transform="translate(376.8,51.5)"><path d="M.5 2.5 L9.5 1.5 V6 L.5 8z" fill="#454545"/><path d="M-6.5 -6.5 L4 -8.5 L9.3 -6.8 L2.5 -4.6 L.3 -.5 L-9.3 -2z" fill="url(#gbd)" stroke="#0a1870" stroke-width=".5"/><path d="M2 -6 L9 -7.8 L5.5 -8.6 L-1 -7.6z" fill="#8c9ce8" opacity=".8"/><path d="M-9.3 -2 L.3 -.5 V7.7 L-9.3 6z" fill="url(#gb)" stroke="#4a5cc0" stroke-width=".6"/></g>
<g transform="translate(408.0,51.5)"><path d="M-6.3 -5 L6 -8.3 V3 L-6.3 6.5z" fill="url(#gb)"/><path d="M-6.3 -5.3 V7" stroke="#f01010" stroke-width="1.7"/><path d="M6.1 -9 V3.5" stroke="#f01010" stroke-width="1.7"/></g>
<g transform="translate(438.7,51.5)"><path d="M-2.5 -7.5 L6.3 -5 V4 L-3 8 L-6 7.5 L-6 2z" fill="url(#gbd)"/><path d="M-2.5 -7.5 L-6 2 H-3 L6.3 -5z" fill="#2c50c0"/><path d="M-2.8 -7.7 L6.3 -5.2 V4.2" fill="none" stroke="#f01010" stroke-width="1.5"/><rect x="-6.2" y="2" width="3" height="5.6" fill="#fff" stroke="#f01010" stroke-width="1.3"/></g>
<g transform="translate(470.5,51.5)"><path d="M-2 -8 L6.5 -7 C7 0 2 8 -5 8.5 L-6 3 C-3 2 -2 -3 -2 -8z" fill="url(#gbd)" stroke="#3050c8" stroke-width=".6"/><path d="M-3.5 4.5 C0 3.5 3.5 -1 4 -5" fill="none" stroke="#6a7ce0" stroke-width="1" stroke-dasharray="2 1.2"/><path d="M-2 -8 L6.5 -6.8 L8 -2.5" fill="none" stroke="#f01010" stroke-width="1.5"/><path d="M6.3 -6.3 L9 -9.5" stroke="#f01010" stroke-width="1.6"/><rect x="-6" y="2.8" width="3.4" height="5.6" fill="#fff" stroke="#f01010" stroke-width="1.3"/><path d="M-10.5 5.7 h4.5" stroke="#f01010" stroke-width="2"/></g>
<g transform="translate(500.2,51.5)"><path d="M-8 2 L-2 -.2 L9 .3 L3 2.6z" fill="#a8a8a8" stroke="#8a8a8a" stroke-width=".7"/><path d="M-8 8 L-2 5.6 L9 6.1 L3 8.6z" fill="#a8a8a8" stroke="#8a8a8a" stroke-width=".7"/><path d="M-4 1.6 L-1 .6 L5 .9 L2 2z" fill="#d8d8d8"/><path d="M-4 7.5 L-1 6.4 L5 6.7 L2 7.9z" fill="#d0d0d0"/><path d="M-1.9 1 V-4 H-5.6 L0 -9.3 L5.6 -4 H1.9 V1z" fill="#8e8e8e" stroke="#7e7e7e" stroke-width=".5"/></g>
<g transform="translate(532.3,51.5)"><path d="M7 3 l3.5 -1 v3.5 l-3.5 2z" fill="#9a9a9a"/><path d="M-9.3 2 L-3.5 -1.2 L7.8 -.2 L7.8 5.5 L2.5 8.5 L-9.3 8z" fill="#c9c9c9" stroke="#a4a4a4" stroke-width=".8"/><path d="M-9.3 2 L2.5 3 L7.8 -.2 L-3.5 -1.2z" fill="#a9a9a9"/><path d="M2.5 3 V8.5" stroke="#a4a4a4" stroke-width=".7"/><path d="M-5.5 1.6 L-2.5 0 L4 .6 L1 2.2z" fill="#c4c4c4"/></g>
<g stroke="#cfccc7" stroke-width="1"><path d="M552.3 48.8h4.5M552.3 51.8h4.5M552.3 54.8h4.5"/></g><g stroke="#fcfcfb" stroke-width="1"><path d="M552.3 49.8h4.5M552.3 52.8h4.5M552.3 55.8h4.5"/></g>
<g transform="translate(574.4,51.5)"><ellipse cx="3.5" cy="7" rx="5" ry="1.4" fill="#333" opacity=".75"/><ellipse cx="7.5" cy="1.6" rx="3" ry="1" fill="#333" opacity=".7"/><circle cx="3.2" cy="-3.5" r="6" fill="url(#gbl)" stroke="#5a62d8" stroke-width=".7"/><circle cx="-3" cy="2.5" r="6.8" fill="url(#gbs)" stroke="#06105c" stroke-width=".7"/></g>
<g transform="translate(605.3,51.5)"><ellipse cx="4" cy="7.3" rx="6" ry="1.5" fill="#8a8a8a"/><circle cx="-2.5" cy="2.5" r="6.8" fill="url(#ggs)" stroke="#6c6c6c" stroke-width=".6"/><circle cx="3.4" cy="-3.2" r="6" fill="#fff" stroke="#9a9a9a" stroke-width=".9"/></g>
<g transform="translate(636.4,51.5)"><ellipse cx="4" cy="6.5" rx="6" ry="1.6" fill="#8a8a8a"/><path d="M-9.3 2.5 A6.8 6.8 0 0 0 3.5 5.8 Q5 2.5 8 .5 A6 6 0 1 0 -3 -5.5 Q-3.5 -4 -5 -3.8 A6.8 6.8 0 0 0 -9.3 2.5z" fill="url(#ggs)" stroke="#747474" stroke-width=".5"/></g>
<g transform="translate(668.0,51.5)"><path d="M-2 7.3 h7" stroke="#808080" stroke-width="1.3"/><circle cx="-3.2" cy="3" r="6.4" fill="#fff" stroke="#8e8e8e" stroke-width=".9"/><circle cx="2.8" cy="-3" r="6" fill="#fff" stroke="#8e8e8e" stroke-width=".9"/><path d="M-3 -3.3 A6.4 6.4 0 0 1 3 3 A6 6 0 0 1 -3 -3.3z" fill="#868686"/><circle cx="-3.2" cy="3" r="6.4" fill="none" stroke="#8e8e8e" stroke-width=".9"/></g>
<g transform="translate(698.3,51.5)"><path d="M4 5 l5.5 -.5 v2 l-5 1.5z" fill="#7a7a7a"/><path d="M-2.5 -4 L-8 7 A8 2 0 0 0 6 7 L2 -3z" fill="url(#ggs)"/><circle cx="-1.3" cy="-5.5" r="4" fill="#e4e4e4" stroke="#b4b4b4" stroke-width=".9"/><path d="M1.8 -2.6 L8.5 2.5" stroke="#8a8a8a" stroke-width="1.2"/></g>
<g transform="translate(729.8,51.5)"><path d="M-9.8 -9.5 L3.2 -5.5 V9.5 L-9.8 5z" fill="#e0e0e0" stroke="#c6c6c6" stroke-width=".7"/><path d="M-7.8 -6.6 L-2.3 -9.6 L7.4 -8 L4.2 -5.6z" fill="#acacac"/><path d="M4.2 -6 L7.4 -8 L9.2 -1.8 V3.6 L4.2 6.1z" fill="#9e9e9e"/><rect x="-7.8" y="-6.4" width="12" height="12.5" fill="#8e8e8e" stroke="#b6b6b6" stroke-width=".9"/><path d="M-2 -4.8 V1.6 M-7 -5.8 L-2 -4.8 L3.6 -5.6 M-7 5.4 L-2 1.6 L3.6 5.4" fill="none" stroke="#747474" stroke-width=".8"/><path d="M-2 -4.8 L-7 -5.8 V5.4 L-2 1.6z" fill="#848484"/></g>
<g transform="translate(760.9,51.5)"><path d="M-10 -3 L-3 -6.5 L10 -5.5 L3 -1.5z" fill="#bdbdbd" opacity=".8"/><path d="M-10 3.5 L-3 0 L10 1 L3 5z" fill="#bdbdbd" opacity=".8"/><path d="M-4.5 -7 L-1 -9.3 L4.5 -8.8 L5 5.5 L1 8.8 L-4.5 8z" fill="#9c9c9c"/><path d="M-4.5 -7 L1 -6.3 L4.5 -8.8 L-1 -9.3z" fill="#c8c8c8"/><path d="M-4.5 -7 L1 -6.3 V8.8 L-4.5 8z" fill="#ababab"/><path d="M-10 3.5 L3 5 L10 1" fill="none" stroke="#c6c6c6" stroke-width=".8"/><path d="M-10 -3 L3 -1.5 L10 -5.5" fill="none" stroke="#c6c6c6" stroke-width=".8"/></g>
<g stroke="#cfccc7" stroke-width="1"><path d="M781 48.8h4.5M781 51.8h4.5M781 54.8h4.5"/></g><g stroke="#fcfcfb" stroke-width="1"><path d="M781 49.8h4.5M781 52.8h4.5M781 55.8h4.5"/></g>
<g transform="translate(802.6,51.5)"><path d="M4 -4 L10 2 L9 7 L3 5z" fill="#6c6c6c" opacity=".75"/><path d="M2 4 L10.5 6.8 L10 8.6 L1.5 6z" fill="#e0d060" stroke="#a89830" stroke-width=".4"/><path d="M-9.5 -6 Q-9.5 -9 -6.5 -9 L1 -9.3 L4.2 -7 L4.5 4.5 L1.5 7.5 L-5.5 6.5 Q-9 6 -9.2 2z" fill="#dcdcdc" stroke="#9c9c9c" stroke-width=".7"/><path d="M1 -8.8 L4.2 -7 L4.5 4.5 L1.5 7.5z" fill="#b4b4b4"/><ellipse cx="-4" cy="-.8" rx="4.6" ry="5" fill="#000"/><path d="M-8.55 -1.6 A4.6 5 0 0 1 .5 -1.9 L-8.55 -1.6z" fill="#f0f020"/><ellipse cx="3" cy="-.5" rx="1" ry="2.2" fill="#f0f020"/></g>
<g transform="translate(833.4,51.5)"><path d="M4 -4 L10 2 L9 7 L3 5z" fill="#6c6c6c" opacity=".75"/><path d="M2 4 L10.5 6.8 L10 8.6 L1.5 6z" fill="#e0d060" stroke="#a89830" stroke-width=".4"/><path d="M-9.5 -6 Q-9.5 -9 -6.5 -9 L1 -9.3 L4.2 -7 L4.5 4.5 L1.5 7.5 L-5.5 6.5 Q-9 6 -9.2 2z" fill="#dcdcdc" stroke="#9c9c9c" stroke-width=".7"/><path d="M1 -8.8 L4.2 -7 L4.5 4.5 L1.5 7.5z" fill="#b4b4b4"/><ellipse cx="-4" cy="-.8" rx="4.6" ry="5" fill="#000" opacity=".95"/><path d="M-8.55 -1.6 A4.6 5 0 0 1 .5 -1.9 L-8.55 -1.6z" fill="#f0f020"/><ellipse cx="3" cy="-.5" rx="1" ry="2.2" fill="#f0f020"/><path d="M-6 -7.5 C-3 -10.5 3 -10.5 6 -7" fill="none" stroke="#2858c8" stroke-width="1.8"/><path d="M4 -9 l4 2.6 l-4 1z" fill="#1840a8"/><path d="M-8.9 -8 L-3.4 7.8 L9.6 -6.5" fill="none" stroke="#111" stroke-width="3.2" stroke-linejoin="miter"/><path d="M-8.9 -8 L-3.4 7.8 L9.6 -6.5" fill="none" stroke="#e23a32" stroke-width="1.9" stroke-linejoin="miter"/></g>
<path d="M854.4 41v20" stroke="#d8d5d0" stroke-width="1"/><path d="M855.4 41v20" stroke="#faf9f8" stroke-width="1"/>
<g transform="translate(874.0,51.5)"><path d="M4 -4 L10 2 L9 7 L3 5z" fill="#6c6c6c" opacity=".75"/><path d="M2 4 L10.5 6.8 L10 8.6 L1.5 6z" fill="#e0d060" stroke="#a89830" stroke-width=".4"/><path d="M-9.5 -6 Q-9.5 -9 -6.5 -9 L1 -9.3 L4.2 -7 L4.5 4.5 L1.5 7.5 L-5.5 6.5 Q-9 6 -9.2 2z" fill="#dcdcdc" stroke="#9c9c9c" stroke-width=".7"/><path d="M1 -8.8 L4.2 -7 L4.5 4.5 L1.5 7.5z" fill="#b4b4b4"/><ellipse cx="-4" cy="-.8" rx="4.6" ry="5" fill="#000"/><path d="M-8.55 -1.6 A4.6 5 0 0 1 .5 -1.9 L-8.55 -1.6z" fill="#f0f020"/><ellipse cx="3" cy="-.5" rx="1" ry="2.2" fill="#f0f020"/><g transform="rotate(-42)"><rect x="-12.5" y="-.3" width="3.2" height="4.2" fill="#e08888" stroke="#a85050" stroke-width=".5"/><rect x="-9.3" y="-.3" width="14.5" height="4.2" fill="#ece080" stroke="#b0a040" stroke-width=".5"/><path d="M5.2 -.3 L9.5 1 L11.5 1.8 L9.5 2.6 L5.2 3.9z" fill="#e8c8a0"/><path d="M8.6 .6 L12.6 1.8 L8.6 3z" fill="#111"/></g></g>
<g transform="translate(905.5,51.5)"><path d="M-9.7 7.6 V-7.8 H9.7 V7.6 H6.9 V-5.2 H-6.9 V7.6z" fill="#1e8a1e"/><g transform="translate(.8,.8) scale(.84)"><path d="M4 -4 L10 2 L9 7 L3 5z" fill="#6c6c6c" opacity=".75"/><path d="M2 4 L10.5 6.8 L10 8.6 L1.5 6z" fill="#e0d060" stroke="#a89830" stroke-width=".4"/><path d="M-9.5 -6 Q-9.5 -9 -6.5 -9 L1 -9.3 L4.2 -7 L4.5 4.5 L1.5 7.5 L-5.5 6.5 Q-9 6 -9.2 2z" fill="#dcdcdc" stroke="#9c9c9c" stroke-width=".7"/><path d="M1 -8.8 L4.2 -7 L4.5 4.5 L1.5 7.5z" fill="#b4b4b4"/><ellipse cx="-4" cy="-.8" rx="4.6" ry="5" fill="#000"/><path d="M-8.55 -1.6 A4.6 5 0 0 1 .5 -1.9 L-8.55 -1.6z" fill="#f0f020"/><ellipse cx="3" cy="-.5" rx="1" ry="2.2" fill="#f0f020"/></g><path d="M-9 -1.5 L-3.5 -9.3 L7.5 -2 L-1 8.5" fill="none" stroke="#c83434" stroke-width="2.3" stroke-linejoin="miter"/></g>
<g transform="translate(936.2,51.5)"><path d="M4 -4 L10 2 L9 7 L3 5z" fill="#6c6c6c" opacity=".75"/><path d="M2 4 L10.5 6.8 L10 8.6 L1.5 6z" fill="#e0d060" stroke="#a89830" stroke-width=".4"/><path d="M-9.5 -6 Q-9.5 -9 -6.5 -9 L1 -9.3 L4.2 -7 L4.5 4.5 L1.5 7.5 L-5.5 6.5 Q-9 6 -9.2 2z" fill="#dcdcdc" stroke="#9c9c9c" stroke-width=".7"/><path d="M1 -8.8 L4.2 -7 L4.5 4.5 L1.5 7.5z" fill="#b4b4b4"/><ellipse cx="-4" cy="-.8" rx="4.6" ry="5" fill="#000"/><path d="M-8.55 -1.6 A4.6 5 0 0 1 .5 -1.9 L-8.55 -1.6z" fill="#f0f020"/><ellipse cx="3" cy="-.5" rx="1" ry="2.2" fill="#f0f020"/><path d="M-9 -1.5 L-3.5 -9.3 L7.5 -2 L-1 8.5" fill="none" stroke="#c83434" stroke-width="2.3" stroke-linejoin="miter"/></g>
<g transform="translate(967.6,51.5)"><path d="M-9.7 7.6 V-7.8 H9.7 V7.6 H6.9 V-5.2 H-6.9 V7.6z" fill="#1e8a1e"/><g transform="translate(.8,.8) scale(.84)"><path d="M4 -4 L10 2 L9 7 L3 5z" fill="#6c6c6c" opacity=".75"/><path d="M2 4 L10.5 6.8 L10 8.6 L1.5 6z" fill="#e0d060" stroke="#a89830" stroke-width=".4"/><path d="M-9.5 -6 Q-9.5 -9 -6.5 -9 L1 -9.3 L4.2 -7 L4.5 4.5 L1.5 7.5 L-5.5 6.5 Q-9 6 -9.2 2z" fill="#dcdcdc" stroke="#9c9c9c" stroke-width=".7"/><path d="M1 -8.8 L4.2 -7 L4.5 4.5 L1.5 7.5z" fill="#b4b4b4"/><ellipse cx="-4" cy="-.8" rx="4.6" ry="5" fill="#000"/><path d="M-8.55 -1.6 A4.6 5 0 0 1 .5 -1.9 L-8.55 -1.6z" fill="#f0f020"/><ellipse cx="3" cy="-.5" rx="1" ry="2.2" fill="#f0f020"/></g></g>
</svg>
<div class="t" style="left:414.5px;top:8.9px;">Part</div>
</body>
</html>
